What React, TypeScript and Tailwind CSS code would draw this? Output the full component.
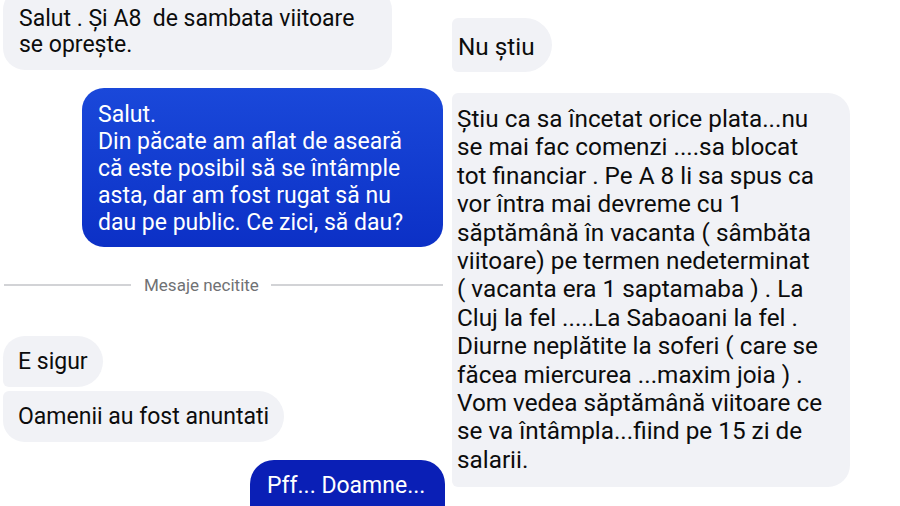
const font = "font-['Roboto',sans-serif]";

function Separator({ label }: { label: string }) {
  return (
    <div className="flex items-center pl-[4px] pr-[3px]">
      <div className="h-[2px] w-[127px] bg-[#d2d3d6]" />
      <span className="ml-[13px] mr-[12px] text-[17px] leading-5 text-[#707174]">{label}</span>
      <div className="h-[2px] flex-1 bg-[#d2d3d6]" />
    </div>
  );
}

export default function App() {
  return (
    <div className={`${font} h-[506px] w-[900px] overflow-hidden bg-white text-[#0c0c0c]`}>
      <div className="grid h-full grid-cols-[446px_1fr]">
        {/* Left conversation */}
        <div className="flex flex-col text-[23px]">
          <div className="-mt-[12px] ml-[3px] w-[389px] rounded-[22px] bg-[#f1f2f6] px-4 pt-[18px] pb-[12px] leading-[26px]">
            Salut . Și A8&nbsp; de sambata viitoare
            <br />
            se oprește.
          </div>

          <div className="mt-[18px] ml-[82px] w-[361px] rounded-[22px] bg-gradient-to-b from-[#1a48da] to-[#0c30c6] px-4 pt-[13px] pb-[11px] leading-[27px] text-white">
            Salut.
            <br />
            Din păcate am aflat de aseară
            <br />
            că este posibil să se întâmple
            <br />
            asta, dar am fost rugat să nu
            <br />
            dau pe public. Ce zici, să dau?
          </div>

          <div className="mt-[28px]">
            <Separator label="Mesaje necitite" />
          </div>

          <div className="mt-[41px] flex flex-col items-start gap-[4px] pl-[3px]">
            <div className="rounded-tl-[22px] rounded-tr-[26px] rounded-br-[26px] rounded-bl-[6px] bg-[#f1f2f6] px-[15px] py-[12px] leading-[27px]">
              E sigur
            </div>
            <div className="rounded-tl-[6px] rounded-tr-[26px] rounded-br-[26px] rounded-bl-[22px] bg-[#f1f2f6] px-[15px] py-[12px] leading-[27px]">
              Oamenii au fost anuntati
            </div>
          </div>

          <div className="mt-[18px] ml-[250px] w-[195px] rounded-t-[24px] bg-[#0a1fb6] px-[17px] pt-[12px] pb-[14px] leading-[27px] text-white">
            Pff... Doamne...
          </div>
        </div>

        {/* Right conversation */}
        <div className="flex flex-col items-start pl-[6px] text-[24.3px]">
          <div className="mt-[18px] w-[100px] rounded-l-[6px] rounded-r-[27px] bg-[#f1f2f6] pl-[6px] pt-[15px] pb-[12px] leading-[27px]">
            Nu știu
          </div>

          <div className="mt-[21px] w-[398px] rounded-l-[6px] rounded-r-[22px] bg-[#f1f2f6] pl-[5px] pt-[12px] pb-[13px] leading-[28.4px]">
            Știu ca sa încetat orice plata...nu
            <br />
            se mai fac comenzi ....sa blocat
            <br />
            tot financiar . Pe A 8 li sa spus ca
            <br />
            vor întra mai devreme cu 1
            <br />
            săptămână în vacanta ( sâmbăta
            <br />
            viitoare) pe termen nedeterminat
            <br />
            ( vacanta era 1 saptamaba ) . La
            <br />
            Cluj la fel .....La Sabaoani la fel .
            <br />
            Diurne neplătite la soferi ( care se
            <br />
            făcea miercurea ...maxim joia ) .
            <br />
            Vom vedea săptămână viitoare ce
            <br />
            se va întâmpla...fiind pe 15 zi de
            <br />
            salarii.
          </div>
        </div>
      </div>
    </div>
  );
}
